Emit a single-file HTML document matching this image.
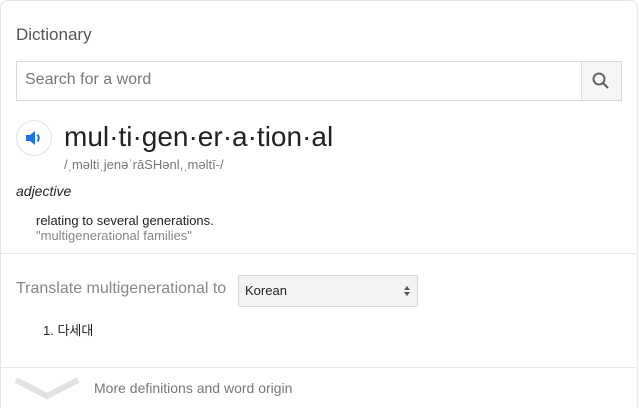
<!DOCTYPE html>
<html><head><meta charset="utf-8"><style>
*{margin:0;padding:0;box-sizing:border-box}
html,body{width:638px;height:408px;overflow:hidden}
body{background:#fff;font-family:"Liberation Sans",Arial,sans-serif;position:relative}
.card{position:absolute;left:0;top:0;width:638px;height:408px;border:1px solid #e4e4e4;border-bottom:none;border-radius:8px 8px 0 0}
.abs{position:absolute;white-space:nowrap}
</style></head><body>
<div class="card"></div>
<div class="abs" style="left:16px;top:25px;font-size:17px;color:#555">Dictionary</div>
<div class="abs" style="left:16px;top:61px;width:606px;height:40px;border:1px solid #d9d9d9"></div>
<div class="abs" style="left:25px;top:71px;font-size:16px;color:#777">Search for a word</div>
<div class="abs" style="left:581px;top:62px;width:40px;height:38px;background:#f5f5f5;border-left:1px solid #e0e0e0"></div>
<svg class="abs" style="left:591px;top:71px" width="20" height="20" viewBox="0 0 20 20"><circle cx="8" cy="8" r="5.5" fill="none" stroke="#666" stroke-width="2"/><path d="M12 12l5 5" stroke="#666" stroke-width="2.2"/></svg>
<div class="abs" style="left:16px;top:120px;width:36px;height:36px;border-radius:50%;border:1px solid #e2e2e2"></div>
<svg class="abs" style="left:24px;top:129px" width="20" height="18" viewBox="0 0 20 18"><path d="M2 6h4l5-4v14l-5-4H2z" fill="#1a73e8"/><path d="M13.5 5.5q2.5 3.5 0 7" stroke="#1a73e8" stroke-width="2" fill="none"/></svg>
<div class="abs" style="left:64px;top:121px;font-size:28px;color:#222">mul·ti·gen·er·a·tion·al</div>
<div class="abs" style="left:64px;top:157px;font-size:13px;color:#777">/ˌməltiˌjenəˈrāSHənl,ˌməltī-/</div>
<div class="abs" style="left:16px;top:183px;font-size:14px;color:#222;font-style:italic">adjective</div>
<div class="abs" style="left:36px;top:213px;font-size:13px;color:#222">relating to several generations.</div>
<div class="abs" style="left:36px;top:228px;font-size:13px;color:#888">"multigenerational families"</div>
<div class="abs" style="left:0;top:253px;width:638px;height:1px;background:#e8e8e8"></div>
<div class="abs" style="left:16px;top:280px;font-size:16px;color:#888">Translate multigenerational to</div>
<div class="abs" style="left:238px;top:275px;width:180px;height:32px;background:#f3f3f3;border:1px solid #d6d6d6;border-radius:2px"></div>
<div class="abs" style="left:245px;top:283px;font-size:13px;color:#222">Korean</div>
<svg class="abs" style="left:403px;top:284px" width="8" height="14" viewBox="0 0 8 14"><path d="M1 6l3-4 3 4z M1 8l3 4 3-4z" fill="#555"/></svg>
<div class="abs" style="left:43px;top:320px;font-size:13px;color:#222;font-family:'Liberation Sans','Noto Sans CJK KR',sans-serif">1. 다세대</div>
<div class="abs" style="left:0;top:367px;width:638px;height:1px;background:#e8e8e8"></div>
<svg class="abs" style="left:12px;top:374px" width="70" height="26" viewBox="0 0 70 26"><path d="M4 6l31 16 31-16" stroke="#e2e2e2" stroke-width="6" fill="none"/></svg>
<div class="abs" style="left:94px;top:380px;font-size:14px;color:#777">More definitions and word origin</div>
</body></html>
